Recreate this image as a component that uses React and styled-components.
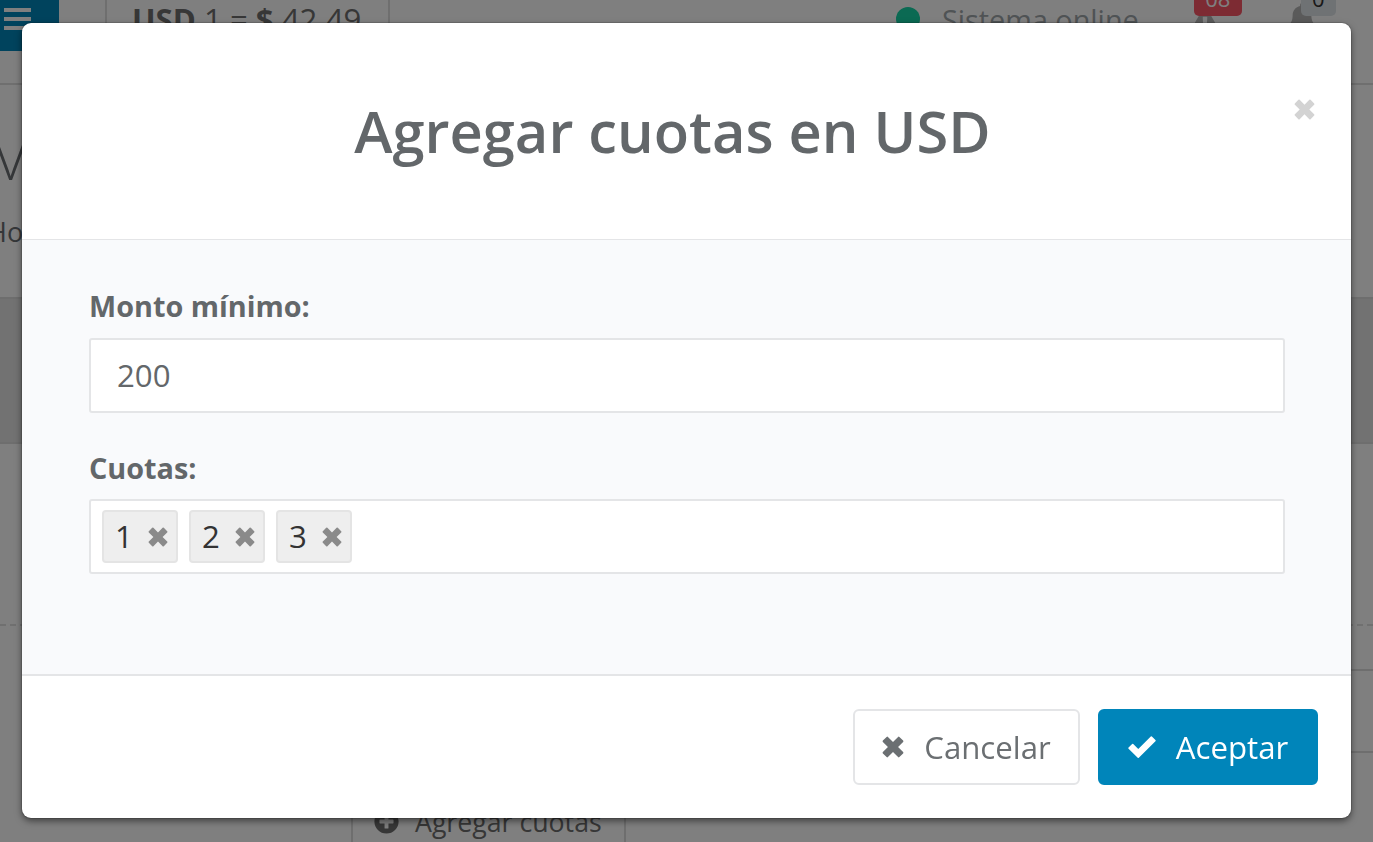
import React from 'react';
import styled, { createGlobalStyle } from 'styled-components';
import { FaBell, FaExclamationTriangle, FaPlusCircle } from 'react-icons/fa';

const GlobalStyle = createGlobalStyle`
    html, body {
        margin: 0;
        padding: 0;
        height: 100%;
        overflow: hidden;
        background: #fff;
        font-family: "Open Sans", sans-serif;
        color: #6b6f72;
    }

    * {
        box-sizing: border-box;
    }
`;

/* page behind the modal */
const Page = styled.div`
    width: 1373px;
    height: 842px;
    overflow: hidden;
    display: flex;
    flex-direction: column;
`;

const TopBar = styled.header`
    flex: 0 0 85px;
    display: flex;
    align-items: flex-start;
    border-bottom: 2px solid #dfdfdf;
`;

const MenuButton = styled.div`
    width: 59px;
    height: 51px;
    background: #0086ba;
    display: flex;
    flex-direction: column;
    gap: 5px;
    padding: 8px 0 0 4px;
`;

const MenuBar = styled.span`
    display: block;
    width: 27px;
    height: 4px;
    background: #fff;
`;

const RateCell = styled.div`
    margin-left: 46px;
    width: 285px;
    height: 83px;
    padding-left: 25px;
    border-left: 2px solid #dfdfdf;
    border-right: 2px solid #dfdfdf;
    font-size: 31.2px;
    line-height: 38px;
    color: #6f6f6f;
    white-space: nowrap;

    b {
        font-weight: 700;
    }
`;

const Status = styled.div`
    margin-left: 506px;
    display: flex;
    align-items: center;
    gap: 22px;
    height: 38px;
    font-size: 28.8px;
    color: #9fa6aa;
    white-space: nowrap;
`;

const StatusDot = styled.span`
    width: 24px;
    height: 24px;
    border-radius: 50%;
    background: #16d4a6;
`;

const BellSlot = styled.div`
    position: relative;
    flex: none;
    width: ${(p) => p.$width}px;
    height: 40px;
    margin-left: ${(p) => p.$left}px;
    color: #b4b4b4;
`;

const BellIcon = styled.span`
    position: absolute;
    top: ${(p) => p.$top}px;
    left: ${(p) => p.$left}px;
    display: flex;
`;

const Badge = styled.span`
    position: absolute;
    top: -12px;
    left: ${(p) => p.$left}px;
    width: ${(p) => p.$width}px;
    height: 28px;
    border-radius: 5px;
    background: ${(p) => p.$bg};
    color: ${(p) => p.$color};
    font-size: 22px;
    line-height: 20px;
    text-align: center;
`;

const TitleBlock = styled.div`
    flex: 0 0 212px;
    padding-top: 38px;
    overflow: hidden;
`;

const PageTitle = styled.div`
    margin-left: -6px;
    font-size: 57.6px;
    line-height: 70px;
    font-weight: 300;
    color: #6b6f72;
`;

const Crumb = styled.div`
    margin-left: -13px;
    margin-top: 21px;
    font-size: 27px;
    line-height: 36px;
    color: #6b6f72;
`;

const Band = styled.div`
    flex: 0 0 147px;
    background: #e4e4e4;
    border-top: 2px solid #dcdcdc;
    border-bottom: 2px solid #dcdcdc;
`;

const Spacer = styled.div`
    flex: 0 0 182px;
    border-bottom: 2px dashed #e0e0e0;
`;

const Row = styled.div`
    flex: 0 0 ${(p) => p.$height}px;
    margin-left: 40px;
    border-bottom: 2px solid #dcdcdc;
`;

const AddBar = styled.div`
    flex: 1;
    margin-left: 351px;
    width: 275px;
    display: flex;
    align-items: flex-start;
    gap: 16px;
    padding: 51px 0 0 21px;
    border-left: 2px solid #dcdcdc;
    border-right: 2px solid #dcdcdc;
    font-size: 26.7px;
    line-height: 36px;
    color: #6f6f6f;
    white-space: nowrap;

    svg {
        flex: none;
        margin-top: 5px;
    }
`;

/* modal */
const Overlay = styled.div`
    position: fixed;
    inset: 0;
    background: rgba(0, 0, 0, 0.5);
`;

const Modal = styled.div`
    position: absolute;
    left: 22px;
    top: 23px;
    width: 1329px;
    height: 795px;
    display: flex;
    flex-direction: column;
    background: #fff;
    border-radius: 9px;
    overflow: hidden;
    box-shadow: 0 0 0 1px rgba(0, 0, 0, 0.12), 0 3px 7px rgba(0, 0, 0, 0.5);
    transform: translateZ(0);
`;

const ModalHeader = styled.div`
    position: relative;
    flex: 0 0 217px;
    border-bottom: 1px solid #e4e5e7;
    padding-right: 28px;
    text-align: center;
`;

const Title = styled.h2`
    margin: 0;
    padding-top: 67px;
    font-size: 57.8px;
    line-height: 82px;
    font-weight: 600;
    color: #63676a;
`;

const CloseButton = styled.button`
    position: absolute;
    top: 76px;
    right: 36px;
    padding: 0;
    border: 0;
    background: none;
    color: #d3d3d3;
    display: flex;
`;

const ModalBody = styled.div`
    flex: 0 0 436px;
    background: #f9fafc;
    border-bottom: 2px solid #e4e5e7;
    padding: 47px 66px 0 67px;
`;

const Label = styled.label`
    display: block;
    font-size: 28.8px;
    line-height: 38px;
    font-weight: 700;
    color: #63676a;
    margin-bottom: ${(p) => p.$gap}px;
`;

const Field = styled.div`
    height: 75px;
    margin-bottom: 36px;
    background: #fff;
    border: 2px solid #e4e5e7;
    border-radius: 3px;
    display: flex;
    align-items: center;
    padding-left: ${(p) => p.$pad}px;
    gap: 11px;
    font-size: 31.2px;
    color: #63676a;
`;

const FieldValue = styled.span`
    margin-bottom: 2px;
`;

const Chip = styled.span`
    width: 76px;
    height: 53px;
    flex: none;
    display: flex;
    align-items: center;
    gap: 15px;
    padding-left: 11px;
    background: #eee;
    border: 2px solid #e4e4e4;
    border-radius: 4px;
    color: #333;
`;

const ChipRemove = styled.span`
    display: flex;
    color: #8a8a8a;
`;

const ModalFooter = styled.div`
    flex: 1;
    display: flex;
    justify-content: flex-end;
    align-items: flex-start;
    gap: 18px;
    padding: 33px 33px 0 0;
`;

const Button = styled.button`
    height: 76px;
    width: ${(p) => p.$width}px;
    padding: 0;
    display: flex;
    align-items: center;
    justify-content: center;
    gap: 20px;
    border-radius: 6px;
    border: 2px solid ${(p) => (p.$primary ? '#0085ba' : '#e4e5e7')};
    background: ${(p) => (p.$primary ? '#0085ba' : '#fff')};
    color: ${(p) => (p.$primary ? '#fff' : '#6b6f72')};
    font-family: "Open Sans", sans-serif;
    font-size: 31.2px;
`;

const Cross = ({ size }) => (
    <svg width={size} height={size} viewBox="0 0 20 20" fill="currentColor">
        <path d="M10 5.4 14.600 .8Q15.200 .2 15.800 .8L19.200 4.200Q19.800 4.800 19.200 5.400L14.600 10 19.200 14.600Q19.800 15.200 19.200 15.800L15.800 19.200Q15.200 19.800 14.600 19.200L10 14.600 5.400 19.200Q4.800 19.800 4.200 19.200L.8 15.800Q.2 15.200 .8 14.600L5.400 10 .8 5.400Q.2 4.800 .8 4.200L4.200 .8Q4.800 .2 5.400 .8Z" />
    </svg>
);

const Check = ({ size }) => (
    <svg width={size} height={size * 0.8} viewBox="0 0 30 24" fill="currentColor">
        <path d="M10.400 23.400 .6 13.600Q0 13 .6 12.400L4.400 8.600Q5 8 5.600 8.600L11 14 24.400 .6Q25 0 25.600 .6L29.400 4.400Q30 5 29.400 5.600L11.600 23.400Q11 24 10.400 23.400Z" />
    </svg>
);

const App = () => {
    const quotas = [1, 2, 3];

    return (
        <>
            <GlobalStyle />
            <Page>
                <TopBar>
                    <MenuButton>
                        <MenuBar />
                        <MenuBar />
                        <MenuBar />
                    </MenuButton>
                    <RateCell><b>USD</b> 1 = <b>$</b> 42.49</RateCell>
                    <Status>
                        <StatusDot />
                        Sistema online
                    </Status>
                    <BellSlot $width={60} $left={55}>
                        <BellIcon $top={6} $left={-4}><FaExclamationTriangle size={30} /></BellIcon>
                        <Badge $left={0} $width={48} $bg="#fa5666" $color="#fff">08</Badge>
                    </BellSlot>
                    <BellSlot $width={60} $left={36}>
                        <BellIcon $top={3} $left={-3}><FaBell size={30} /></BellIcon>
                        <Badge $left={11} $width={35} $bg="#dee4e8" $color="#333">0</Badge>
                    </BellSlot>
                </TopBar>
                <TitleBlock>
                    <PageTitle>V</PageTitle>
                    <Crumb>Ho</Crumb>
                </TitleBlock>
                <Band />
                <Spacer />
                <Row $height={45} />
                <Row $height={82} />
                <AddBar>
                    <FaPlusCircle size={25} />
                    Agregar cuotas
                </AddBar>
            </Page>
            <Overlay>
                <Modal>
                    <ModalHeader>
                        <Title>Agregar cuotas en USD</Title>
                        <CloseButton><Cross size={21} /></CloseButton>
                    </ModalHeader>
                    <ModalBody>
                        <Label $gap={13}>Monto mínimo:</Label>
                        <Field $pad={26}><FieldValue>200</FieldValue></Field>
                        <Label $gap={12}>Cuotas:</Label>
                        <Field $pad={11}>
                            {quotas.map((q) => (
                                <Chip key={q}>
                                    <FieldValue>{q}</FieldValue>
                                    <ChipRemove><Cross size={20} /></ChipRemove>
                                </Chip>
                            ))}
                        </Field>
                    </ModalBody>
                    <ModalFooter>
                        <Button $width={227}><Cross size={22} /> Cancelar</Button>
                        <Button $width={220} $primary><Check size={28} /> Aceptar</Button>
                    </ModalFooter>
                </Modal>
            </Overlay>
        </>
    );
};

export default App;
